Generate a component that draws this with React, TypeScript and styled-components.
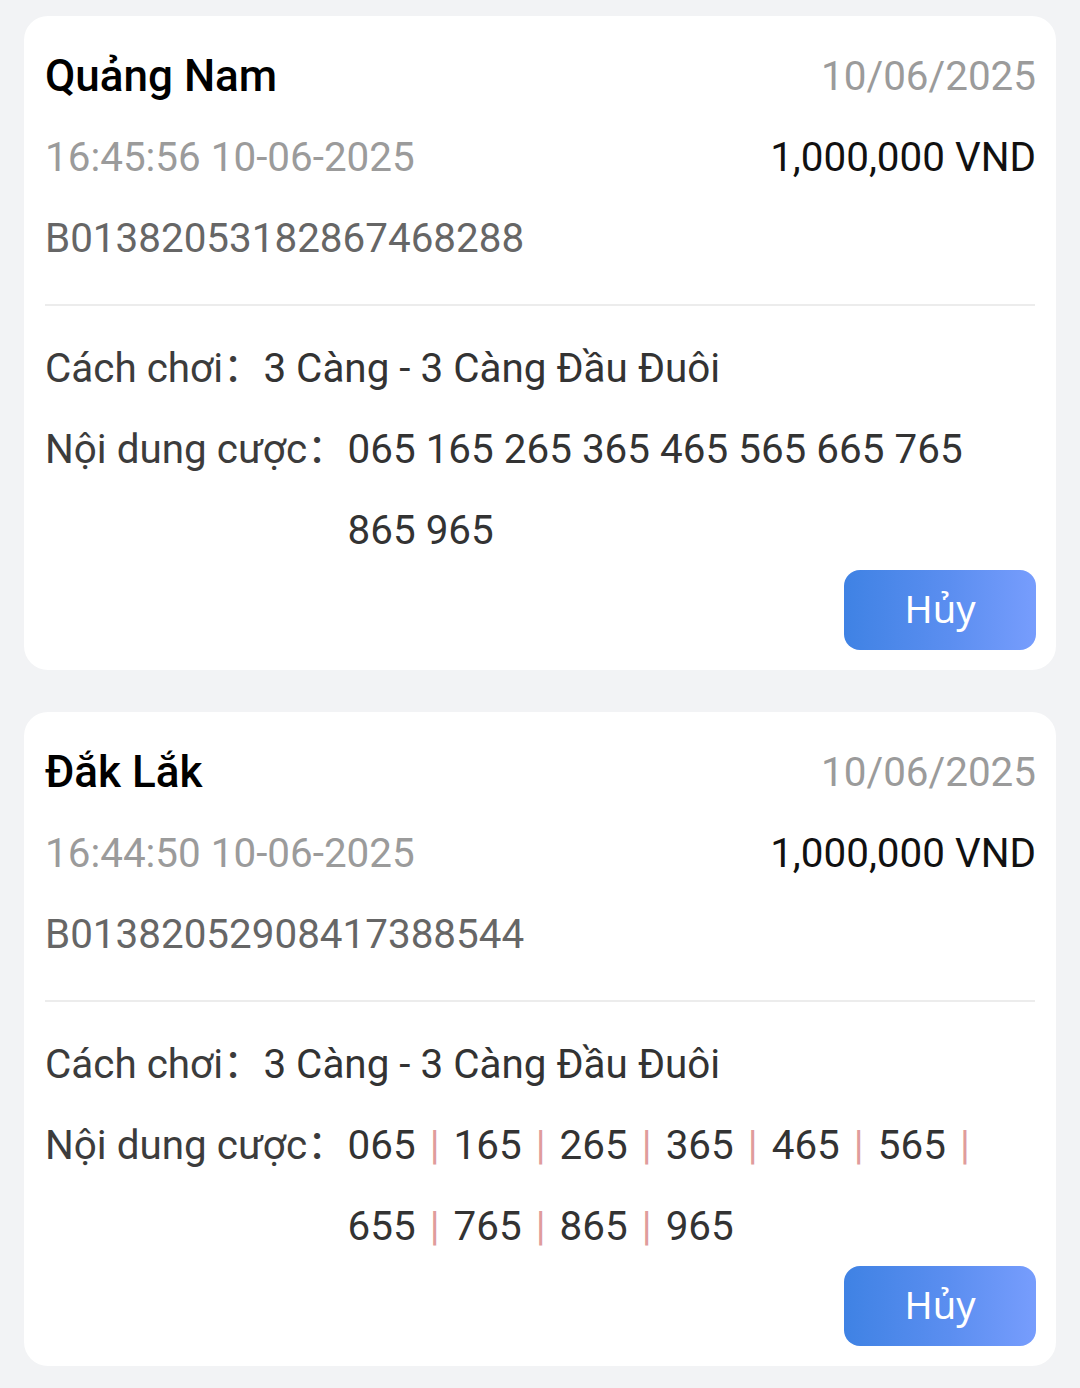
import React from 'react';
import styled, { createGlobalStyle } from 'styled-components';

const GlobalStyle = createGlobalStyle`
	body {
		margin: 0;
		background: #f2f3f5;
		font-family: Roboto, "Noto Sans CJK SC", sans-serif;
	}
`;

type Bet = {
	province: string;
	date: string;
	time: string;
	amount: string;
	code: string;
	type: string;
	numbers: string[];
	piped: boolean;
};

const bets: Bet[] = [
	{
		province: 'Quảng Nam',
		date: '10/06/2025',
		time: '16:45:56 10-06-2025',
		amount: '1,000,000 VND',
		code: 'B01382053182867468288',
		type: '3 Càng - 3 Càng Đầu Đuôi',
		numbers: ['065', '165', '265', '365', '465', '565', '665', '765', '865', '965'],
		piped: false,
	},
	{
		province: 'Đắk Lắk',
		date: '10/06/2025',
		time: '16:44:50 10-06-2025',
		amount: '1,000,000 VND',
		code: 'B01382052908417388544',
		type: '3 Càng - 3 Càng Đầu Đuôi',
		numbers: ['065', '165', '265', '365', '465', '565', '655', '765', '865', '965'],
		piped: true,
	},
];

const App = () => {
	return (
		<>
			<GlobalStyle />
			<Page>
				{bets.map((el, idx) => (
					<Card key={idx}>
						<Row>
							<Title>{el.province}</Title>
							<Muted>{el.date}</Muted>
						</Row>
						<Row>
							<Muted>{el.time}</Muted>
							<Amount>{el.amount}</Amount>
						</Row>
						<Row>
							<Code>{el.code}</Code>
						</Row>
						<Divider />
						<DetailRow>
							<Label>Cách chơi：</Label>
							<Value>{el.type}</Value>
						</DetailRow>
						<DetailRow>
							<Label>Nội dung cược：</Label>
							<Value>
								{el.numbers.map((n, i) => (
									<React.Fragment key={i}>
										{n}
										{i < el.numbers.length - 1 &&
											(el.piped ? (
												<>
													{' '}
													<Pipe>|</Pipe>{' '}
												</>
											) : (
												' '
											))}
									</React.Fragment>
								))}
							</Value>
						</DetailRow>
						<Actions>
							<CancelButton>Hủy</CancelButton>
						</Actions>
					</Card>
				))}
			</Page>
		</>
	);
};

const Page = styled.div`
	display: flex;
	flex-direction: column;
	gap: 42px;
	padding: 16px 24px 22px;
`;

const Card = styled.div`
	background: #fff;
	border-radius: 24px;
	padding: 20px 20px 20px 21px;
`;

const Row = styled.div`
	display: flex;
	justify-content: space-between;
	align-items: center;
	height: 81px;
	font-size: 40.4px;
	line-height: 81px;
`;

const Title = styled.span`
	font-size: 44px;
	font-weight: 500;
	color: #000;
`;

const Muted = styled.span`
	color: #9b9b9b;
`;

const Amount = styled.span`
	color: #111;
`;

const Code = styled.span`
	color: #666;
`;

const Divider = styled.div`
	height: 2px;
	background: #ececec;
	margin: 25px 1px 22px 0;
`;

const DetailRow = styled.div`
	display: flex;
	font-size: 40.4px;
	line-height: 81px;
`;

const Label = styled.span`
	white-space: nowrap;
	color: #3c3c3c;
`;

const Value = styled.span`
	color: #333;
`;

const Pipe = styled.span`
	color: #e09c9c;
	margin: 0 4px;
`;

const Actions = styled.div`
	display: flex;
	justify-content: flex-end;
	margin-top: -1px;
`;

const CancelButton = styled.button`
	width: 192px;
	height: 80px;
	border: none;
	border-radius: 16px;
	background: linear-gradient(90deg, #3f82e4 0%, #5b8ef0 55%, #779dfd 100%);
	color: #fff;
	font-family: "Noto Sans", sans-serif;
	font-size: 38px;
	line-height: 72px;
	padding: 0 0 4px;
`;

export default App;
